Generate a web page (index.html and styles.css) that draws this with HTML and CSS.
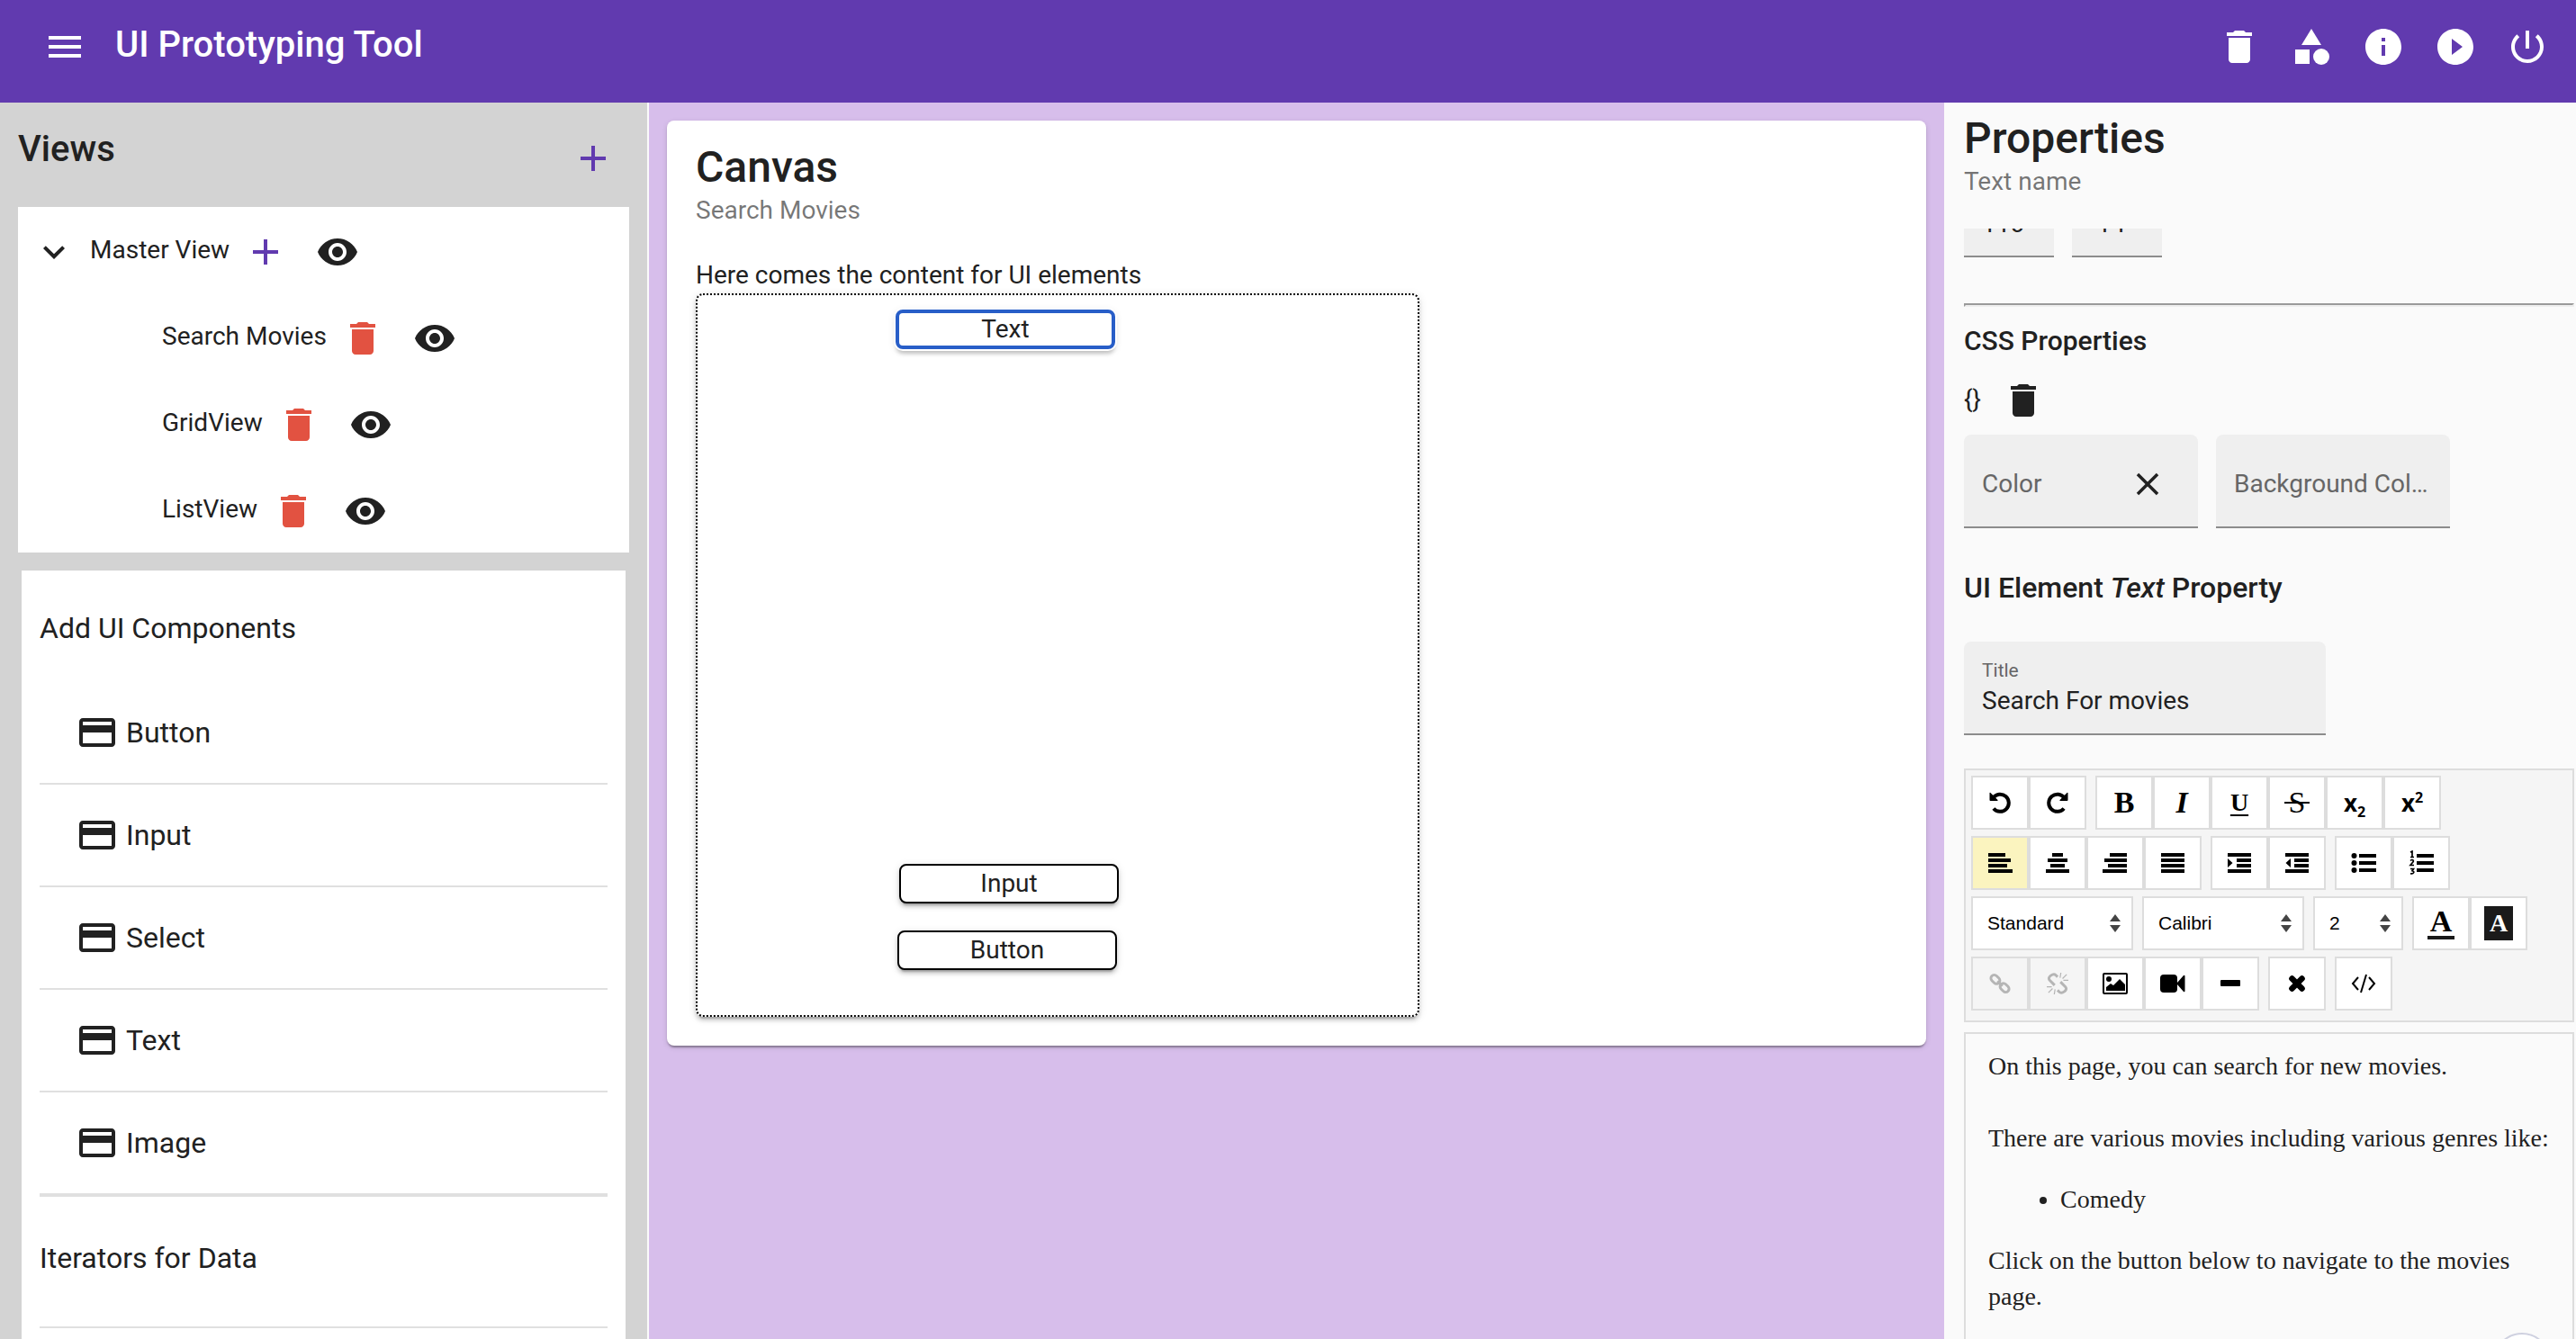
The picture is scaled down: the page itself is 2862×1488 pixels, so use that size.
FILE: index.html
```html
<!DOCTYPE html>
<html lang="en">
<head>
<meta charset="utf-8">
<title>UI Prototyping Tool</title>
<link rel="stylesheet" href="styles.css">
</head>
<body>
<svg class="sprite" aria-hidden="true">
  <symbol id="i-menu" viewBox="0 0 24 24"><path d="M3 18h18v-2H3v2zm0-5h18v-2H3v2zm0-7v2h18V6H3z"/></symbol>
  <symbol id="i-trash" viewBox="0 0 24 24"><path d="M6 19c0 1.1.9 2 2 2h8c1.100 0 2-.9 2-2V7H6v12zM19 4h-3.500l-1-1h-5l-1 1H5v2h14V4z"/></symbol>
  <symbol id="i-shapes" viewBox="0 0 24 24"><path d="M12 2l-5.500 9h11z"/><circle cx="17.500" cy="17.500" r="4.500"/><path d="M3 13.500h8v8H3z"/></symbol>
  <symbol id="i-info" viewBox="0 0 24 24"><path d="M12 2C6.480 2 2 6.480 2 12s4.480 10 10 10 10-4.480 10-10S17.520 2 12 2zm1 15h-2v-6h2v6zm0-8h-2V7h2v2z"/></symbol>
  <symbol id="i-play" viewBox="0 0 24 24"><path d="M12 2C6.480 2 2 6.480 2 12s4.480 10 10 10 10-4.480 10-10S17.520 2 12 2zm-2 14.500v-9l6 4.500-6 4.500z"/></symbol>
  <symbol id="i-power" viewBox="0 0 24 24"><path d="M13 3h-2v10h2V3zm4.830 2.170l-1.420 1.420C17.990 7.860 19 9.810 19 12c0 3.870-3.130 7-7 7s-7-3.130-7-7c0-2.190 1.010-4.140 2.580-5.420L6.170 5.170C4.230 6.820 3 9.260 3 12c0 4.970 4.030 9 9 9s9-4.030 9-9c0-2.740-1.230-5.180-3.170-6.830z"/></symbol>
  <symbol id="i-plus" viewBox="0 0 24 24"><path d="M19 13h-6v6h-2v-6H5v-2h6V5h2v6h6v2z"/></symbol>
  <symbol id="i-chevron" viewBox="0 0 24 24"><path d="M16.590 8.590L12 13.170 7.410 8.590 6 10l6 6 6-6z"/></symbol>
  <symbol id="i-eye" viewBox="0 0 24 24"><path d="M12 4.500C7 4.500 2.730 7.610 1 12c1.730 4.390 6 7.500 11 7.500s9.270-3.110 11-7.500c-1.730-4.390-6-7.500-11-7.500zM12 17c-2.760 0-5-2.240-5-5s2.240-5 5-5 5 2.240 5 5-2.240 5-5 5zm0-8c-1.660 0-3 1.340-3 3s1.340 3 3 3 3-1.340 3-3-1.340-3-3-3z"/></symbol>
  <symbol id="i-card" viewBox="0 0 24 24"><path d="M20 4H4c-1.110 0-1.990.89-1.990 2L2 18c0 1.110.89 2 2 2h16c1.110 0 2-.89 2-2V6c0-1.110-.89-2-2-2zm0 14H4v-6h16v6zm0-10H4V6h16v2z"/></symbol>
  <symbol id="i-close" viewBox="0 0 24 24"><path d="M19 6.410L17.590 5 12 10.590 6.410 5 5 6.410 10.590 12 5 17.590 6.410 19 12 13.410 17.590 19 19 17.590 13.410 12z"/></symbol>
  <symbol id="i-undo" viewBox="0 0 24 24"><path d="M4.500 6.500a9.600 9.600 0 1 1 .4 12" fill="none" stroke="currentColor" stroke-width="4"/><path d="M.5 1q.6-.5 1 0l8 8q.5 1-.5 1h-7.500q-1 0-1-1z"/></symbol>
  <symbol id="i-left" viewBox="0 0 28 24"><path d="M1 1h19v4H1zM1 7h25v4H1zM1 13h21v4H1zM1 19h27v4H1z"/></symbol>
  <symbol id="i-center" viewBox="0 0 28 24"><path d="M8 1h12v4H8zM3 7h22v4H3zM6 13h16v4H6zM1 19h26v4H1z"/></symbol>
  <symbol id="i-right" viewBox="0 0 28 24"><path d="M8 1h19v4H8zM2 7h25v4H2zM6 13h21v4H6zM0 19h27v4H0z"/></symbol>
  <symbol id="i-justify" viewBox="0 0 28 24"><path d="M1 1h26v4H1zM1 7h26v4H1zM1 13h26v4H1zM1 19h26v4H1z"/></symbol>
  <symbol id="i-indent" viewBox="0 0 28 24"><path d="M1 1h26v4H1zM11 7h16v4H11zM11 13h16v4H11zM1 19h26v4H1zM1 7l5.500 5L1 17z"/></symbol>
  <symbol id="i-outdent" viewBox="0 0 28 24"><path d="M1 1h26v4H1zM11 7h16v4H11zM11 13h16v4H11zM1 19h26v4H1zM7 7l-5.500 5L7 17z"/></symbol>
  <symbol id="i-bullets" viewBox="0 0 28 24"><circle cx="3.500" cy="4" r="3"/><circle cx="3.500" cy="12" r="3"/><circle cx="3.500" cy="20" r="3"/><path d="M9 2h19v4H9zM9 10h19v4H9zM9 18h19v4H9z"/></symbol>
  <symbol id="i-numbers" viewBox="0 0 28 28"><path d="M9 4h19v4H9zM9 12h19v4H9zM9 20h19v4H9z"/><path d="M2 2l2-1v6M2 7.500h4M2 11.500c2-2 4-.5 3 1.300L2 16.500h4M2 20.500h3.500L4 22.700c3 .5 2 4-2 3" fill="none" stroke="currentColor" stroke-width="1.700"/></symbol>
  <symbol id="i-link" viewBox="0 0 26 26"><g fill="none" stroke="currentColor" stroke-width="3.200"><rect x="1.500" y="4" width="12" height="8" rx="4" transform="rotate(45 7.500 8)"/><rect x="12.500" y="14" width="12" height="8" rx="4" transform="rotate(45 18.500 18)"/><path d="M10 10l6 6"/></g></symbol>
  <symbol id="i-unlink" viewBox="0 0 26 26"><g fill="none" stroke="currentColor"><path d="M13 5l-2-2C8 0 0 5 3.500 9l6 6M13 21l2 2c3 3 11-2 7.500-6l-6-6" stroke-width="3.200"/><path d="M17 0l-1 6M24 2l-5 5M26 9h-6M9 26l1-6M2 24l5-5M0 17h6" stroke-width="1.300"/></g></symbol>
  <symbol id="i-image" viewBox="0 0 30 26"><path fill-rule="evenodd" d="M3 1h24a2 2 0 0 1 2 2v20a2 2 0 0 1-2 2H3a2 2 0 0 1-2-2V3a2 2 0 0 1 2-2zM3 3v20h24V3z"/><circle cx="8" cy="8" r="3"/><path d="M5 21v-4l5-4 3 2 7-7 6 6v7z"/></symbol>
  <symbol id="i-video" viewBox="0 0 28 22"><rect y="1" width="19" height="20" rx="4"/><path d="M19 10l7-8q1.500-1 1.500 1v16q0 2-1.500 1l-7-8z"/></symbol>
  <symbol id="i-minus" viewBox="0 0 22 8"><rect width="22" height="7" rx="1"/></symbol>
  <symbol id="i-cross" viewBox="0 0 20 20"><path d="M5 5l10 10M15 5L5 15" stroke="currentColor" stroke-width="6" stroke-linecap="round"/></symbol>
  <symbol id="i-code" viewBox="0 0 28 22"><path d="M8 4L2 11l6 7M20 4l6 7-6 7M17 1l-6 20" fill="none" stroke="currentColor" stroke-width="2"/></symbol>
</svg>

<header class="topbar">
  <button class="icon-btn" aria-label="Menu"><svg><use href="#i-menu"/></svg></button>
  <h1 class="topbar-title">UI Prototyping Tool</h1>
  <nav class="topbar-actions">
    <button class="icon-btn" aria-label="Delete"><svg><use href="#i-trash"/></svg></button>
    <button class="icon-btn" aria-label="Components"><svg><use href="#i-shapes"/></svg></button>
    <button class="icon-btn" aria-label="Information"><svg><use href="#i-info"/></svg></button>
    <button class="icon-btn" aria-label="Run"><svg><use href="#i-play"/></svg></button>
    <button class="icon-btn" aria-label="Log out"><svg><use href="#i-power"/></svg></button>
  </nav>
</header>

<div class="workspace">
  <aside class="sidebar">
    <div class="views-head">
      <h2 class="views-title">Views</h2>
      <button class="icon-btn accent" aria-label="Add view"><svg><use href="#i-plus"/></svg></button>
    </div>
    <ul class="tree">
      <li class="tree-row">
        <button class="icon-btn" aria-label="Collapse"><svg><use href="#i-chevron"/></svg></button>
        <span>Master View</span>
        <button class="icon-btn accent" aria-label="Add child view"><svg><use href="#i-plus"/></svg></button>
        <button class="icon-btn" aria-label="Show"><svg><use href="#i-eye"/></svg></button>
      </li>
      <li class="tree-row child">
        <span>Search Movies</span>
        <button class="icon-btn warn" aria-label="Delete"><svg><use href="#i-trash"/></svg></button>
        <button class="icon-btn" aria-label="Show"><svg><use href="#i-eye"/></svg></button>
      </li>
      <li class="tree-row child">
        <span>GridView</span>
        <button class="icon-btn warn" aria-label="Delete"><svg><use href="#i-trash"/></svg></button>
        <button class="icon-btn" aria-label="Show"><svg><use href="#i-eye"/></svg></button>
      </li>
      <li class="tree-row child">
        <span>ListView</span>
        <button class="icon-btn warn" aria-label="Delete"><svg><use href="#i-trash"/></svg></button>
        <button class="icon-btn" aria-label="Show"><svg><use href="#i-eye"/></svg></button>
      </li>
    </ul>
    <section class="palette">
      <h3 class="palette-title">Add UI Components</h3>
      <ul class="palette-list">
        <li class="palette-item"><svg><use href="#i-card"/></svg>Button</li>
        <li class="palette-item"><svg><use href="#i-card"/></svg>Input</li>
        <li class="palette-item"><svg><use href="#i-card"/></svg>Select</li>
        <li class="palette-item"><svg><use href="#i-card"/></svg>Text</li>
        <li class="palette-item"><svg><use href="#i-card"/></svg>Image</li>
      </ul>
      <h3 class="palette-title second">Iterators for Data</h3>
    </section>
  </aside>

  <main class="stage">
    <section class="card">
      <h2 class="panel-title">Canvas</h2>
      <p class="panel-subtitle">Search Movies</p>
      <p class="card-hint">Here comes the content for UI elements</p>
      <div class="canvas">
        <div class="node selected" style="left:220px;top:16px">Text</div>
        <div class="node" style="left:224px;top:632px">Input</div>
        <div class="node" style="left:222px;top:706px">Button</div>
      </div>
    </section>
  </main>

  <aside class="properties">
    <h2 class="panel-title">Properties</h2>
    <p class="panel-subtitle">Text name</p>
    <div class="scroller">
      <div class="size-row">
        <input class="field size" aria-label="X position" value="110">
        <input class="field size" aria-label="Y position" value="-14">
      </div>
      <hr class="rule">
      <h3 class="css-title">CSS Properties</h3>
      <div class="css-actions">
        <span class="braces">{}</span>
        <button class="icon-btn" aria-label="Clear styles"><svg><use href="#i-trash"/></svg></button>
      </div>
      <div class="color-row">
        <div class="field color">
          <input class="bare" aria-label="Color" placeholder="Color">
          <button class="icon-btn clear" aria-label="Clear color"><svg><use href="#i-close"/></svg></button>
        </div>
        <div class="field color"><input class="bare" aria-label="Background Color" placeholder="Background Color"></div>
      </div>
      <h3 class="element-title">UI Element <em>Text</em> Property</h3>
      <div class="field title-field">
        <label for="title">Title</label>
        <input class="bare" id="title" value="Search For movies">
      </div>

      <div class="toolbar">
        <div class="tool-row">
          <div class="group">
            <button class="tool" aria-label="Undo"><svg class="s24"><use href="#i-undo"/></svg></button>
            <button class="tool" aria-label="Redo"><svg class="s24 flip"><use href="#i-undo"/></svg></button>
          </div>
          <div class="group">
            <button class="tool"><b>B</b></button>
            <button class="tool"><b><i>I</i></b></button>
            <button class="tool under"><u>U</u></button>
            <button class="tool strike"><s>S</s></button>
            <button class="tool script"><span>x<sub>2</sub></span></button>
            <button class="tool script"><span>x<sup>2</sup></span></button>
          </div>
        </div>
        <div class="tool-row">
          <div class="group">
            <button class="tool active" aria-label="Align left"><svg class="s28"><use href="#i-left"/></svg></button>
            <button class="tool" aria-label="Align center"><svg class="s28"><use href="#i-center"/></svg></button>
            <button class="tool" aria-label="Align right"><svg class="s28"><use href="#i-right"/></svg></button>
            <button class="tool" aria-label="Justify"><svg class="s28"><use href="#i-justify"/></svg></button>
          </div>
          <div class="group">
            <button class="tool" aria-label="Indent"><svg class="s28"><use href="#i-indent"/></svg></button>
            <button class="tool" aria-label="Outdent"><svg class="s28"><use href="#i-outdent"/></svg></button>
          </div>
          <div class="group">
            <button class="tool" aria-label="Bulleted list"><svg class="s28"><use href="#i-bullets"/></svg></button>
            <button class="tool" aria-label="Numbered list"><svg class="s28"><use href="#i-numbers"/></svg></button>
          </div>
        </div>
        <div class="tool-row">
          <div class="picker"><select aria-label="Heading"><option>Standard</option></select></div>
          <div class="picker"><select aria-label="Font"><option>Calibri</option></select></div>
          <div class="picker small"><select aria-label="Font size"><option>2</option></select></div>
          <div class="group">
            <button class="tool ink"><b>A</b></button>
            <button class="tool paper"><b>A</b></button>
          </div>
        </div>
        <div class="tool-row">
          <div class="group">
            <button class="tool" disabled aria-label="Link"><svg class="s24"><use href="#i-link"/></svg></button>
            <button class="tool" disabled aria-label="Unlink"><svg class="s24"><use href="#i-unlink"/></svg></button>
            <button class="tool" aria-label="Image"><svg class="s30"><use href="#i-image"/></svg></button>
            <button class="tool" aria-label="Video"><svg class="s28"><use href="#i-video"/></svg></button>
            <button class="tool" aria-label="Horizontal line"><svg class="s22"><use href="#i-minus"/></svg></button>
          </div>
          <div class="group"><button class="tool" aria-label="Clear formatting"><svg class="s22"><use href="#i-cross"/></svg></button></div>
          <div class="group"><button class="tool" aria-label="Source"><svg class="s28"><use href="#i-code"/></svg></button></div>
        </div>
      </div>
      <div class="editor" contenteditable="true" spellcheck="false">
        <p>On this page, you can search for new movies.<br><br>There are various movies including various genres like:</p>
        <ul><li>Comedy</li></ul>
        <p>Click on the button below to navigate to the movies page.</p>
      </div>
      <span class="bubble"></span>
    </div>
  </aside>
</div>
</body>
</html>
```

FILE: styles.css
```css
* { box-sizing: border-box; }

body {
  margin: 0;
  height: 100vh;
  display: flex;
  flex-direction: column;
  overflow: hidden;
  font-family: Roboto, "Liberation Sans", sans-serif;
  font-size: 28px;
  line-height: 40px;
  color: #212121;
  background: #fafafa;
}

h1, h2, h3, p, ul { margin: 0; padding: 0; font-weight: 400; }
ul { list-style: none; }
button, input, select { font: inherit; color: inherit; }

.sprite { display: none; }

.icon-btn {
  width: 80px;
  height: 80px;
  flex: none;
  display: grid;
  place-items: center;
  padding: 0;
  border: 0;
  background: none;
}
.icon-btn svg, .palette-item svg { width: 48px; height: 48px; fill: currentColor; }
.accent { color: #613aaf; }
.warn { color: #e25241; }

/* Top bar */
.topbar {
  flex: none;
  display: flex;
  height: 114px;
  padding: 12px 14px 0 32px;
  color: #fff;
  background: #613aaf;
}
.topbar-title { padding-left: 16px; font-size: 40px; line-height: 76px; font-weight: 500; }
.topbar-actions { display: flex; margin-left: auto; }

.workspace {
  flex: 1;
  min-height: 0;
  display: grid;
  grid-template-columns: 721px 1fr 702px;
}

/* Sidebar */
.sidebar {
  display: flex;
  flex-direction: column;
  overflow: hidden;
  padding: 0 20px;
  border-right: 2px solid #fafafa;
  background: #d3d3d3;
}
.views-head { flex: none; display: flex; justify-content: space-between; height: 116px; padding-top: 22px; }
.views-title { font-size: 40px; line-height: 60px; font-weight: 500; }
.tree { background: #fff; }
.tree-row { display: flex; align-items: center; height: 96px; padding-top: 4px; }
.tree-row span { padding-bottom: 4px; }
.tree-row.child { padding-left: 160px; }

.palette { flex: 1 0 auto; margin: 20px 4px 0; padding: 0 20px; background: #fff; }
.palette-title { font-size: 32px; line-height: 124px; height: 124px; padding-top: 2px; }
.palette-title.second { line-height: 132px; height: 146px; border-bottom: 2px solid #e0e0e0; }
.palette-list { border-bottom: 2px solid #e0e0e0; }
.palette-item {
  display: flex;
  align-items: center;
  gap: 8px;
  height: 114px;
  padding-left: 40px;
  border-bottom: 2px solid #e0e0e0;
  font-size: 32px;
}

/* Canvas */
.stage { padding: 20px; background: #d7beeb; overflow: hidden; }
.card {
  padding: 24px 32px 32px;
  border-radius: 8px;
  background: #fff;
  box-shadow: 0 4px 2px -2px rgba(0,0,0,.2), 0 2px 2px rgba(0,0,0,.14), 0 2px 6px rgba(0,0,0,.12);
}
.panel-title { font-size: 48px; line-height: 56px; font-weight: 500; }
.panel-subtitle { color: rgba(0,0,0,.54); }
.card-hint { margin-top: 32px; }
.canvas {
  position: relative;
  width: 804px;
  height: 804px;
  border: 2px dotted #000;
  border-radius: 8px;
  box-shadow: 0 6px 2px -4px rgba(0,0,0,.2), 0 4px 4px rgba(0,0,0,.14), 0 2px 10px rgba(0,0,0,.12);
  background: #fff;
}
.node {
  position: absolute;
  width: 244px;
  height: 44px;
  border: 2px solid #000;
  border-radius: 8px;
  line-height: 40px;
  text-align: center;
  background: #fff;
  box-shadow: 0 6px 2px -4px rgba(0,0,0,.2), 0 4px 4px rgba(0,0,0,.14), 0 2px 10px rgba(0,0,0,.12);
}
.node.selected {
  border: 4px solid #285ec8;
  line-height: 36px;
  box-shadow: 0 0 0 2px #fff, 0 6px 4px -1px rgba(0,0,0,.2), 0 2px 10px rgba(0,0,0,.12);
}

/* Properties */
.properties { display: flex; flex-direction: column; padding: 12px 2px 0 22px; overflow: hidden; }
.scroller { position: relative; flex: 1; min-height: 0; margin-top: 32px; overflow: hidden; }
.field {
  border: 0;
  border-bottom: 2px solid #8c8c8c;
  border-radius: 8px 8px 0 0;
  background: #efefef;
}
.size-row { display: flex; gap: 20px; margin-top: -72px; }
.size { width: 100px; height: 104px; padding: 30px 20px 0; outline: 0; }
.rule { margin: 51px 0 0; border: 2px inset #eee; }
.css-title { margin-top: 18px; font-size: 30px; font-weight: 500; }
.css-actions { display: flex; align-items: center; height: 84px; padding-top: 8px; }
.braces { width: 26px; padding-bottom: 2px; }
.color-row { display: flex; gap: 20px; }
.color { display: flex; align-items: center; width: 260px; height: 104px; padding: 8px 20px 0; }
.bare { flex: 1; min-width: 0; width: 100%; padding: 0; border: 0; outline: 0; background: none; text-overflow: ellipsis; }
.bare::placeholder { color: #666; opacity: 1; }
.clear { width: 72px; }
.clear svg { width: 42px; height: 42px; }
.element-title { margin-top: 46px; font-size: 32px; font-weight: 500; }
.title-field { width: 402px; height: 104px; margin-top: 40px; padding: 18px 20px 0; }
.title-field label { display: block; font-size: 21px; line-height: 28px; color: #666; }
.title-field .bare { display: block; height: 40px; }

.toolbar { margin-top: 37px; padding: 6px 6px 11px; border: 2px solid #ddd; background: #f5f5f5; }
.tool-row { display: flex; gap: 10px; }
.tool-row + .tool-row { margin-top: 7px; }
.group { display: flex; }
.tool {
  width: 64px;
  height: 60px;
  display: grid;
  place-items: center;
  padding: 0;
  border: 2px solid #ddd;
  font-family: "Liberation Serif", serif;
  font-size: 34px;
  line-height: 34px;
  color: #000;
  background: #fff;
}
.tool svg { fill: currentColor; }
.tool.active { background: #fbf4bf; }
.tool:disabled { color: #b5b5b5; background: #f5f5f5; }
.s22 { width: 22px; height: 22px; }
.s24 { width: 24px; height: 24px; }
.s28 { width: 28px; height: 28px; }
.s30 { width: 30px; height: 26px; }
.flip { transform: scaleX(-1); }
.under u { font-size: 28px; font-weight: 700; text-decoration-thickness: 2px; text-underline-offset: 4px; }
.strike s { width: 28px; text-decoration: none; background: linear-gradient(#000, #000) center / 28px 2px no-repeat; }
.script { font-family: "Open Sans", sans-serif; font-size: 26px; font-weight: 700; }
.script sub, .script sup { font-size: 16px; line-height: 0; }
.ink b { width: 30px; line-height: 32px; border-bottom: 4px solid #1a1a1a; }
.paper b { width: 32px; line-height: 38px; font-size: 28px; color: #fff; background: #1a1a1a; }
.picker { position: relative; width: 180px; }
.picker.small { width: 100px; }
.picker select {
  width: 100%;
  height: 60px;
  padding: 0 16px;
  appearance: none;
  border: 2px solid #ddd;
  border-radius: 0;
  font-family: "Liberation Sans", sans-serif;
  font-size: 21px;
  color: #000;
  background: #fff;
}
.picker::before, .picker::after {
  content: "";
  position: absolute;
  right: 14px;
  border: 6px solid transparent;
}
.picker::before { top: 14px; border-bottom: 8px solid #444; }
.picker::after { top: 32px; border-top: 8px solid #444; }

.editor {
  height: 600px;
  margin-top: 11px;
  padding: 16px 14px 16px 25px;
  border: 2px solid #ddd;
  font-family: "Liberation Serif", serif;
}
.editor ul { list-style: disc; margin: 28px 0; padding-left: 80px; }
.bubble {
  position: absolute;
  right: 26px;
  bottom: -57px;
  width: 64px;
  height: 64px;
  border: 2px solid #cfd1e0;
  border-radius: 50%;
  background: #fff;
}
```
